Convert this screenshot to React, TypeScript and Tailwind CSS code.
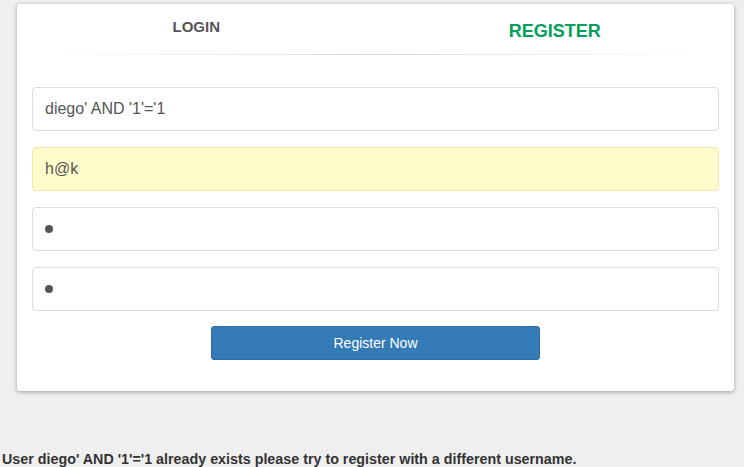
export default function App() {
  return (
    <div className="min-h-[467px] bg-[#efefef] font-['Liberation_Sans',Arial,sans-serif] text-[#555]">
      <div className="pl-[17px] pt-[4px] pr-[10px]">
        <div className="bg-white rounded-[3px] shadow-[0_1px_4px_rgba(0,0,0,0.35)] pb-[31px]">
          {/* tabs */}
          <div className="flex h-[50px]">
            <div className="flex-1 text-center pt-[12px] text-[15px] font-bold text-[#555]">LOGIN</div>
            <div className="flex-1 text-center pt-[14px] text-[18px] font-bold text-[#029f5b]">REGISTER</div>
          </div>
          <div className="h-px mx-[26px] bg-[linear-gradient(to_right,rgba(0,0,0,0),rgba(0,0,0,0.15),rgba(0,0,0,0))]" />

          <div className="px-[15px]">
            <div className="flex flex-col gap-[16px] pt-[32px]">
              <div className="h-[44px] border border-[#ddd] rounded-[4px] flex items-center px-[12px] text-[16px] text-[#555]">
                diego' AND '1'='1
              </div>
              <div className="h-[44px] border border-[#f5e6a8] bg-[#fffbcb] rounded-[4px] flex items-center px-[12px] text-[16px] text-[#555]">
                h@k
              </div>
              <div className="h-[44px] border border-[#ddd] rounded-[4px] flex items-center px-[12px] text-[16px] text-[#555]">
                <span className="w-[8px] h-[8px] rounded-full bg-[#555]" />
              </div>
              <div className="h-[44px] border border-[#ddd] rounded-[4px] flex items-center px-[12px] text-[16px] text-[#555]">
                <span className="w-[8px] h-[8px] rounded-full bg-[#555]" />
              </div>
            </div>

            <div className="flex justify-center pt-[15px]">
              <button className="w-[329px] h-[34px] bg-[#337ab7] border border-[#2e6da4] rounded-[3px] text-white text-[14px]">
                Register Now
              </button>
            </div>
          </div>
        </div>
      </div>
      <p className="pt-[58px] pl-[2px] text-[14.3px] leading-[20px] font-bold text-[#333]">
        User diego' AND '1'='1 already exists please try to register with a different username.
      </p>
    </div>
  );
}
